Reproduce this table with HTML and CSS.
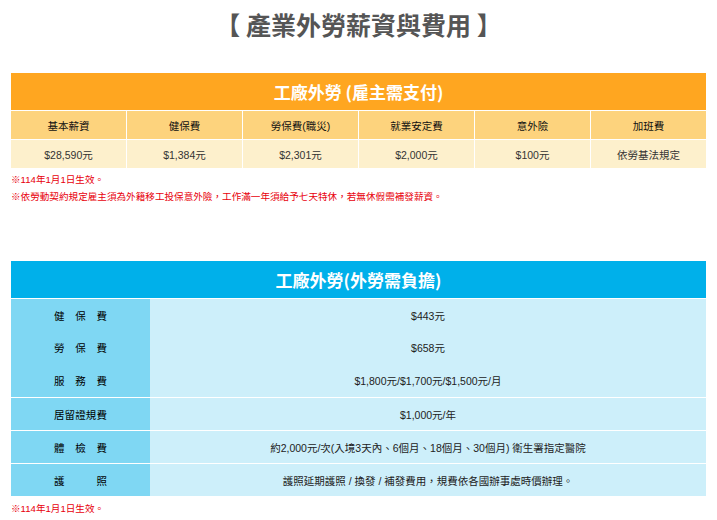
FILE: index.html
```html
<!DOCTYPE html>
<html lang="zh-Hant">
<head>
<meta charset="utf-8">
<title>產業外勞薪資與費用</title>
<link rel="stylesheet" href="styles.css">
</head>
<body>
<div class="page">
  <h1 class="title">【 產業外勞薪資與費用 】</h1>

  <div class="t1">
    <div class="t1-head">工廠外勞 (雇主需支付)</div>
    <div class="t1-th">基本薪資</div>
    <div class="t1-th">健保費</div>
    <div class="t1-th">勞保費(職災)</div>
    <div class="t1-th">就業安定費</div>
    <div class="t1-th">意外險</div>
    <div class="t1-th">加班費</div>
    <div class="t1-td">$28,590元</div>
    <div class="t1-td">$1,384元</div>
    <div class="t1-td">$2,301元</div>
    <div class="t1-td">$2,000元</div>
    <div class="t1-td">$100元</div>
    <div class="t1-td">依勞基法規定</div>
  </div>
  <div class="notes">
    <p>※114年1月1日生效。</p>
    <p>※依勞動契約規定雇主須為外籍移工投保意外險，工作滿一年須給予七天特休，若無休假需補發薪資。</p>
  </div>

  <div class="t2">
    <div class="t2-head">工廠外勞(外勞需負擔)</div>
    <div class="t2-row first">
      <div class="t2-label"><span class="lbl">健保費</span></div>
      <div class="t2-val">$443元</div>
    </div>
    <div class="t2-row">
      <div class="t2-label"><span class="lbl">勞保費</span></div>
      <div class="t2-val">$658元</div>
    </div>
    <div class="t2-row">
      <div class="t2-label"><span class="lbl">服務費</span></div>
      <div class="t2-val">$1,800元/$1,700元/$1,500元/月</div>
    </div>
    <div class="t2-row sep">
      <div class="t2-label"><span class="lbl">居留證規費</span></div>
      <div class="t2-val">$1,000元/年</div>
    </div>
    <div class="t2-row sep">
      <div class="t2-label"><span class="lbl">體檢費</span></div>
      <div class="t2-val">約2,000元/次(入境3天內、6個月、18個月、30個月) 衛生署指定醫院</div>
    </div>
    <div class="t2-row sep">
      <div class="t2-label"><span class="lbl">護照</span></div>
      <div class="t2-val">護照延期護照 / 換發 / 補發費用，規費依各國辦事處時價辦理。</div>
    </div>
  </div>
  <div class="notes bottom">
    <p>※114年1月1日生效。</p>
  </div>
</div>
</body>
</html>
```

FILE: styles.css
```css
* { box-sizing: border-box; }

body {
  margin: 0;
  background: #ffffff;
  font-family: "Liberation Sans", "Noto Sans CJK TC", sans-serif;
  color: #222;
}

.page {
  padding: 0 11px;
}

.title {
  margin: 0 0 25px;
  height: 48px;
  line-height: 48px;
  text-align: center;
  font-family: "Noto Sans CJK TC", sans-serif;
  font-size: 25px;
  font-weight: 700;
  color: #555555;
}

/* Table 1 */
.t1 {
  display: grid;
  grid-template-columns: repeat(6, 1fr);
  gap: 1px;
  background: #ffffff;
}

.t1-head {
  grid-column: 1 / -1;
  height: 37px;
  background: #ffa620;
  color: #ffffff;
  font-family: "Noto Sans CJK TC", sans-serif;
  font-size: 17px;
  font-weight: 700;
  display: flex;
  align-items: center;
  justify-content: center;
}

.t1-th,
.t1-td {
  height: 28px;
  display: flex;
  align-items: center;
  justify-content: center;
  font-size: 10.5px;
  white-space: nowrap;
}

.t1-th {
  background: #fdd37d;
  color: #111;
}

.t1-td {
  background: #fdf0cc;
  color: #333333;
}

/* Notes */
.notes {
  padding-top: 3px;
  color: #e8000b;
  font-size: 9.6px;
}

.notes p {
  margin: 0;
  line-height: 17px;
}

.notes.bottom {
  padding-top: 4px;
}

/* Table 2 */
.t2 {
  margin-top: 56px;
}

.t2-head {
  height: 37px;
  background: #00b0ea;
  color: #ffffff;
  font-family: "Noto Sans CJK TC", sans-serif;
  font-size: 17px;
  font-weight: 700;
  display: flex;
  align-items: center;
  justify-content: center;
}

.t2-row {
  display: grid;
  grid-template-columns: 139px 1fr;
  height: 33px;
}

.t2-row.first,
.t2-row.sep {
  border-top: 1px solid #ffffff;
}

.t2-label {
  background: #7fd7f3;
  display: flex;
  align-items: center;
  justify-content: center;
}

.lbl {
  display: inline-block;
  width: 53px;
  white-space: nowrap;
  text-align: justify;
  text-align-last: justify;
  font-size: 10.5px;
  color: #000;
}

.t2-val {
  background: #cdeffa;
  display: flex;
  align-items: center;
  justify-content: center;
  font-size: 10.5px;
  color: #222;
  white-space: nowrap;
}
```
